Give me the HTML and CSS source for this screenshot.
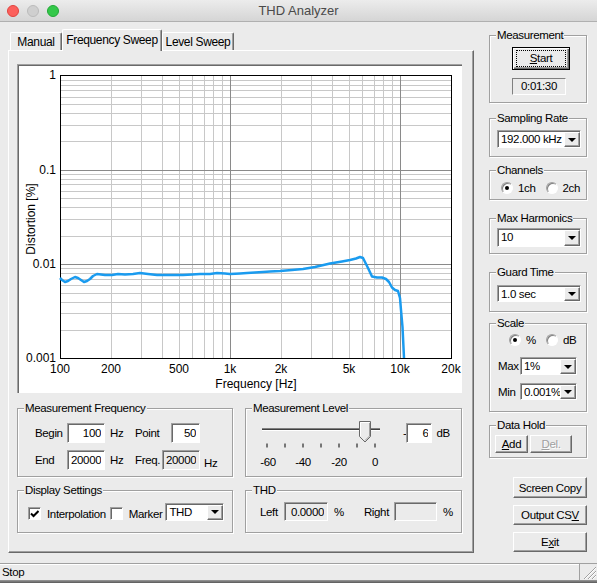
FILE: index.html
```html
<!DOCTYPE html>
<html lang="en">
<head>
<meta charset="UTF-8">
<meta name="viewport" content="width=device-width, initial-scale=1.0">
<title>THD Analyzer</title>
<link rel="stylesheet" href="styles.css">
</head>
<body>

<div class="window">

  <div class="titlebar">
    <div class="lights">
      <span class="light light-close"></span>
      <span class="light light-min"></span>
      <span class="light light-zoom"></span>
    </div>
    <div class="title">THD Analyzer</div>
  </div>

  <div class="main">

    <!-- Left: tab control with the sweep chart -->
    <div class="tabs">
      <div class="tab-strip">
        <div class="tab tab-manual">Manual</div>
        <div class="tab tab-active">Frequency Sweep</div>
        <div class="tab tab-level">Level Sweep</div>
      </div>

      <div class="tab-panel">
        <div class="chart">
          <svg class="plot" width="445" height="329" viewBox="17 64 445 329">
            <path class="grid-minor" d="M111.5 75V358M141.5 75V358M162.5 75V358M179.5 75V358M192.5 75V358M204.5 75V358M213.5 75V358M222.5 75V358M281.5 75V358M311.5 75V358M332.5 75V358M349.5 75V358M362.5 75V358M374.5 75V358M383.5 75V358M392.5 75V358M60 80.5H451M60 85.5H451M60 90.5H451M60 97.5H451M60 104.5H451M60 113.5H451M60 125.5H451M60 141.5H451M60 174.5H451M60 179.5H451M60 184.5H451M60 191.5H451M60 198.5H451M60 207.5H451M60 219.5H451M60 236.5H451M60 268.5H451M60 273.5H451M60 279.5H451M60 285.5H451M60 293.5H451M60 302.5H451M60 313.5H451M60 330.5H451"/>
            <path class="grid-major" d="M230.5 75V358M400.5 75V358M60 170.5H451M60 264.5H451"/>
            <rect class="axis" x="60.5" y="75.5" width="391" height="283"/>
            <polyline class="curve" points="60,278 62,280 65,282 68,281 71,279 75,277 78,278 81,280 84,282 87,281 90,279 93,276 97,274 105,275 112,275 118,274 125,274.5 133,274 140,273 148,274 157,275 170,275 183,275 192,274.5 200,274 210,274 217,273 225,273.5 230,274 240,273.5 247,273 255,272.5 263,272 270,271.5 280,271 292,270 303,269 315,267 330,263.5 342,261.5 350,260 356,258.5 360,257 363,258 365,262 368,268 372,276.5 377,277.5 382,277.5 386,279 389,282 392,287.5 395,290 398,291 400,298 401,310 402.5,327 404,358"/>

            <g class="labels-y">
              <text x="56" y="79">1</text>
              <text x="56" y="174">0.1</text>
              <text x="56" y="268">0.01</text>
              <text x="56" y="362">0.001</text>
            </g>
            <g class="labels-x">
              <text x="60" y="373">100</text>
              <text x="111" y="373">200</text>
              <text x="179" y="373">500</text>
              <text x="230" y="373">1k</text>
              <text x="281" y="373">2k</text>
              <text x="349" y="373">5k</text>
              <text x="400" y="373">10k</text>
              <text x="451" y="373">20k</text>
            </g>
            <text class="axis-title" x="256" y="388">Frequency [Hz]</text>
            <text class="axis-title" transform="translate(35 219) rotate(-90)">Distortion [%]</text>
          </svg>
        </div>

        <div class="settings">
          <div class="group g-freq">
            <span class="group-title">Measurement Frequency</span>
            <div class="row">
              <span class="lbl-name">Begin</span>
              <input class="edit edit-freq" type="text" value="100">
              <span class="unit">Hz</span>
              <span class="lbl-point">Point</span>
              <input class="edit edit-point" type="text" value="50">
            </div>
            <div class="row">
              <span class="lbl-name">End</span>
              <input class="edit edit-freq" type="text" value="20000">
              <span class="unit">Hz</span>
              <span class="lbl-fq">Freq.</span>
              <input class="edit edit-freq" type="text" value="20000" disabled>
              <span class="unit-low">Hz</span>
            </div>
          </div>

          <div class="group g-level">
            <span class="group-title">Measurement Level</span>
            <svg class="slider" width="130" height="53" viewBox="0 0 130 53">
              <rect x="4" y="11" width="118" height="1" fill="#808080"/>
              <rect x="4" y="12" width="118" height="1" fill="#404040"/>
              <rect x="4" y="13" width="118" height="1" fill="#fff"/>
              <path d="M9 26.5v4M27 26.5v4M45 26.5v4M63 26.5v4M81 26.5v4M99 26.5v4M117 26.5v4" stroke="#000"/>
              <polygon points="101.5,4.5 112.5,4.5 112.5,19.5 107,25 101.5,19.5" fill="#ebebeb" stroke="#696969"/>
              <polyline points="102.5,19 102.5,5.5 111.5,5.5" fill="none" stroke="#fff"/>
              <polyline points="111.5,6 111.5,19 107,23.5" fill="none" stroke="#a0a0a0"/>
              <g class="slider-labels">
                <text x="10" y="49">-60</text>
                <text x="45" y="49">-40</text>
                <text x="81" y="49">-20</text>
                <text x="117" y="49">0</text>
              </g>
            </svg>
            <div class="level-value">
              <span class="minus">-</span>
              <input class="edit edit-db" type="text" value="6">
              <span class="unit-db">dB</span>
            </div>
          </div>

          <div class="group g-display">
            <span class="group-title">Display Settings</span>
            <span class="check check-on">
              <svg width="9" height="8" viewBox="0 0 9 8"><path d="M1 3.5l2.5 2.5 5-5" fill="none" stroke="#000" stroke-width="2"/></svg>
            </span>
            <span class="check-text">Interpolation</span>
            <span class="check check-marker"></span>
            <span class="check-text">Marker</span>
            <div class="combo combo-marker"><span class="combo-text">THD</span><span class="combo-btn"></span></div>
          </div>

          <div class="group g-thd">
            <span class="group-title">THD</span>
            <span class="lbl-left">Left</span>
            <input class="edit edit-thd" type="text" value="0.0000" disabled>
            <span class="pct">%</span>
            <span class="lbl-right">Right</span>
            <input class="edit edit-thd edit-thd-r" type="text" value="" disabled>
            <span class="pct">%</span>
          </div>
        </div>
      </div>
    </div>

    <!-- Right: measurement controls -->
    <div class="side">
      <div class="group g-measure">
        <span class="group-title">Measurement</span>
        <button class="btn btn-start"><span class="focus"><u>S</u>tart</span></button>
        <div class="static">0:01:30</div>
      </div>

      <div class="group g-rate">
        <span class="group-title">Sampling Rate</span>
        <div class="combo combo-side"><span class="combo-text">192.000 kHz</span><span class="combo-btn"></span></div>
      </div>

      <div class="group g-channels">
        <span class="group-title">Channels</span>
        <div class="choice"><span class="radio radio-on"></span><span class="choice-text">1ch</span></div>
        <div class="choice"><span class="radio"></span><span class="choice-text">2ch</span></div>
      </div>

      <div class="group g-harm">
        <span class="group-title">Max Harmonics</span>
        <div class="combo combo-side combo-tall"><span class="combo-text">10</span><span class="combo-btn"></span></div>
      </div>

      <div class="group g-guard">
        <span class="group-title">Guard Time</span>
        <div class="combo combo-side combo-short"><span class="combo-text">1.0 sec</span><span class="combo-btn"></span></div>
      </div>

      <div class="group g-scale">
        <span class="group-title">Scale</span>
        <div class="scale-radios">
          <div class="choice"><span class="radio radio-on"></span><span class="choice-text">%</span></div>
          <div class="choice"><span class="radio"></span><span class="choice-text">dB</span></div>
        </div>
        <div class="scale-row">
          <span class="lbl-scale">Max</span>
          <div class="combo combo-scale"><span class="combo-text">1%</span><span class="combo-btn"></span></div>
        </div>
        <div class="scale-row scale-min">
          <span class="lbl-scale">Min</span>
          <div class="combo combo-scale combo-short"><span class="combo-text">0.001%</span><span class="combo-btn"></span></div>
        </div>
      </div>

      <div class="group g-hold">
        <span class="group-title">Data Hold</span>
        <button class="btn btn-add"><u>A</u>dd</button>
        <button class="btn btn-del" disabled><u>D</u>el.</button>
      </div>

      <div class="actions">
        <button class="btn btn-action btn-copy">Screen Copy</button>
        <button class="btn btn-action">Output CS<u>V</u></button>
        <button class="btn btn-action">E<u>x</u>it</button>
      </div>
    </div>

  </div>

  <div class="statusbar">
    <div class="status-text">Stop</div>
    <div class="grip">
      <svg width="17" height="17" viewBox="0 0 17 17">
        <path d="M16 4L4 16M16 8L8 16M16 12L12 16" stroke="#a0a0a0"/>
        <path d="M16 5L5 16M16 9L9 16M16 13L13 16" stroke="#fff"/>
      </svg>
    </div>
  </div>
  <div class="window-edge"></div>

</div>

</body>
</html>
```

FILE: styles.css
```css
/* --- Basic setup --- */
body {
  margin: 0;
  font-family: "Liberation Sans", Arial, sans-serif;
  font-size: 11.5px;
  letter-spacing: -0.35px;
  color: #000;
  background-color: #ebebeb;
}

.window {
  width: 597px;
  height: 583px;
  display: flex;
  flex-direction: column;
  overflow: hidden;
  white-space: nowrap;
}

/* --- Title bar --- */
.titlebar {
  flex: none;
  height: 22px;
  box-sizing: border-box;
  display: grid;
  grid-template-columns: 1fr auto 1fr;
  align-items: center;
  background: linear-gradient(#ececec, #d5d5d5);
  border-bottom: 1px solid #b0b0b0;
}

.lights {
  display: flex;
  gap: 8px;
  padding-left: 7px;
}

.light {
  width: 12px;
  height: 12px;
  border-radius: 50%;
  box-sizing: border-box;
}

.light-close { background: #fc605c; border: 1px solid #e0443f; }
.light-min   { background: #cfcfcf; border: 1px solid #bbbbbb; }
.light-zoom  { background: #34c84a; border: 1px solid #22a836; }

.title {
  font-size: 13px;
  letter-spacing: 0;
  color: #4a4a4a;
}

/* --- Main area --- */
.main {
  flex: 1;
  display: flex;
  gap: 15px;
  padding: 0 10px 0 8px;
}

/* --- Tabs --- */
.tabs {
  width: 466px;
  margin-top: 7px;
}

.tab-strip {
  display: flex;
  align-items: flex-end;
  height: 21px;
  padding-left: 2px;
}

.tab {
  height: 18px;
  box-sizing: border-box;
  padding-top: 2px;
  text-align: center;
  font-size: 12px;
  border: 1px solid;
  border-bottom: 0;
  border-color: #fff #696969 #696969 #fff;
  border-radius: 2px 2px 0 0;
  box-shadow: inset -1px 0 0 #a0a0a0;
}

.tab-manual { width: 52px; }
.tab-level  { width: 72px; }

.tab-active {
  position: relative;
  z-index: 1;
  width: 100px;
  height: 22px;
  margin-bottom: -1px;
  padding-top: 3px;
  background: #ebebeb;
}

.tab-panel {
  height: 503px;
  box-sizing: border-box;
  border: 1px solid;
  border-color: #fff #696969 #696969 #fff;
  box-shadow: inset -1px -1px 0 #a0a0a0;
  padding: 13px 0 0 8px;
}

/* --- Chart --- */
.chart {
  width: 445px;
  height: 329px;
  background: #fff;
  box-shadow: inset 1px 1px 0 #a0a0a0, inset 2px 2px 0 #696969;
}

.plot {
  display: block;
}

.plot text {
  font-size: 12px;
  letter-spacing: 0;
  fill: #000;
}

.grid-minor { fill: none; stroke: #c8c8c8; }
.grid-major { fill: none; stroke: #8a8a8a; }
.axis { fill: none; stroke: #000; }

.curve {
  fill: none;
  stroke: #1a9bef;
  stroke-width: 2.5;
  stroke-linejoin: round;
}

.labels-y text { text-anchor: end; }
.labels-x text,
.axis-title { text-anchor: middle; }

/* --- Settings below the chart --- */
.settings {
  display: grid;
  grid-template-columns: 216px 217px;
  grid-template-rows: 69px 43px;
  gap: 13px 12px;
  margin-top: 15px;
}

.group {
  position: relative;
  box-sizing: border-box;
  border: 1px solid #a0a0a0;
  box-shadow: inset 1px 1px 0 #fff, 1px 1px 0 #fff;
}

.group-title {
  position: absolute;
  top: -8px;
  left: 6px;
  padding: 0 1px;
  line-height: 14px;
  background: #ebebeb;
}

/* Edit boxes */
.edit {
  box-sizing: border-box;
  height: 20px;
  margin: 0;
  padding: 0 3px;
  font: inherit;
  letter-spacing: inherit;
  color: #000;
  text-align: right;
  background: #fff;
  border: 1px solid;
  border-color: #a0a0a0 #fff #fff #a0a0a0;
  box-shadow: inset 1px 1px 0 #696969;
  border-radius: 0;
  outline: none;
}

.edit:disabled {
  background: #ebebeb;
  color: #000;
  -webkit-text-fill-color: #000;
}

.g-freq {
  padding: 14px 0 0 17px;
}

.row {
  display: flex;
  align-items: center;
  height: 20px;
}

.row + .row {
  margin-top: 7px;
}

.lbl-name  { width: 32px; }
.lbl-point { width: 36px; }
.lbl-fq    { width: 27px; }
.unit      { width: 30px; box-sizing: border-box; padding-left: 5px; }
.unit-low  { margin: 6px 0 0 4px; }

.edit-freq  { width: 38px; }
.edit-point { width: 29px; }

/* Level slider */
.g-level {
  display: flex;
  align-items: flex-start;
  padding: 8px 0 0 12px;
}

.slider {
  display: block;
}

.slider-labels text {
  font-size: 11.5px;
  text-anchor: middle;
}

.level-value {
  display: flex;
  align-items: center;
  margin: 6px 0 0 15px;
}

.edit-db { width: 26px; }
.unit-db { margin-left: 4px; }

/* Display settings */
.g-display {
  display: flex;
  align-items: center;
  padding: 0 0 0 10px;
}

.check {
  width: 13px;
  height: 13px;
  box-sizing: border-box;
  display: flex;
  align-items: center;
  justify-content: center;
  background: #fff;
  border: 1px solid;
  border-color: #a0a0a0 #fff #fff #a0a0a0;
  box-shadow: inset 1px 1px 0 #696969;
  margin-top: 4px;
}

.check-text { margin: 4px 0 0 6px; }
.check-marker { margin-left: 4px; }

.combo-marker {
  width: 59px;
  height: 17px;
  margin-left: 3px;
}

/* THD readout */
.g-thd {
  display: flex;
  align-items: center;
  padding: 0 0 0 14px;
}

.edit-thd {
  width: 44px;
  height: 19px;
}

.edit-thd-r { width: 43px; }

.lbl-left  { width: 24px; }
.lbl-right { width: 30px; margin-left: 20px; }
.pct       { margin-left: 6px; }

/* Combo boxes */
.combo {
  display: flex;
  box-sizing: border-box;
  height: 18px;
  background: #fff;
  border: 1px solid;
  border-color: #a0a0a0 #fff #fff #a0a0a0;
  box-shadow: inset 1px 1px 0 #696969;
}

.combo-text {
  flex: 1;
  overflow: hidden;
  padding: 0 0 0 3px;
  line-height: 16px;
}

.combo-btn {
  flex: none;
  width: 16px;
  margin-top: 1px;
  box-sizing: border-box;
  display: flex;
  align-items: center;
  justify-content: center;
  background: #ebebeb;
  border: 1px solid;
  border-color: #fff #696969 #696969 #fff;
  box-shadow: inset -1px -1px 0 #a0a0a0;
}

.combo-btn::after {
  content: "";
  border-style: solid;
  border-width: 4px 4px 0;
  border-color: #000 transparent transparent;
}

/* --- Right column --- */
.side {
  width: 98px;
  display: flex;
  flex-direction: column;
}

.side .group {
  flex: none;
}

.g-measure  { margin-top: 13px; height: 68px; padding: 11px 0 0 22px; }
.g-rate     { margin-top: 15px; height: 39px; padding: 11px 0 0 7px; }
.g-channels { margin-top: 13px; height: 30px; padding: 11px 0 0 11px; display: flex; }
.g-harm     { margin-top: 18px; height: 36px; padding: 9px 0 0 7px; }
.g-guard    { margin-top: 18px; height: 40px; padding: 12px 0 0 7px; }
.g-scale    { margin-top: 11px; height: 89px; padding: 10px 0 0 8px; }
.g-hold     { margin-top: 13px; height: 33px; padding: 9px 0 0 5px; display: flex; gap: 2px; }

.combo-side  { width: 84px; }
.combo-tall  { height: 19px; }
.combo-short { height: 17px; }

.choice {
  display: flex;
  align-items: center;
  height: 12px;
}

.choice + .choice {
  margin-left: 10px;
}

.choice-text {
  margin-left: 5px;
}

.radio {
  width: 12px;
  height: 12px;
  box-sizing: border-box;
  display: flex;
  align-items: center;
  justify-content: center;
  border-radius: 50%;
  background: #fff;
  border: 1px solid;
  border-color: #a0a0a0 #fff #fff #a0a0a0;
  box-shadow: inset 1px 1px 0 #808080;
}

.radio-on::after {
  content: "";
  width: 4px;
  height: 4px;
  border-radius: 50%;
  background: #000;
}

.scale-radios {
  display: flex;
  padding-left: 11px;
}

.scale-row {
  display: flex;
  align-items: center;
  margin-top: 11px;
}

.scale-min {
  margin-top: 8px;
}

.lbl-scale { width: 22px; }
.combo-scale { width: 57px; }

/* --- Buttons --- */
.btn {
  box-sizing: border-box;
  margin: 0;
  padding: 0;
  font: inherit;
  letter-spacing: inherit;
  color: #000;
  background: #ebebeb;
  border: 1px solid;
  border-color: #fff #696969 #696969 #fff;
  border-radius: 0;
  box-shadow: inset -1px -1px 0 #a0a0a0;
}

.btn-start {
  display: block;
  width: 58px;
  height: 23px;
  border-color: #000;
  box-shadow: inset 1px 1px 0 #fff, inset -1px -1px 0 #696969, inset -2px -2px 0 #a0a0a0;
}

.focus {
  display: block;
  margin: 0 3px;
  line-height: 15px;
  border: 1px dotted #000;
}

.static {
  box-sizing: border-box;
  width: 54px;
  height: 17px;
  margin-top: 8px;
  line-height: 15px;
  text-align: center;
  border: 1px solid;
  border-color: #808080 #fff #fff #808080;
}

.btn-add { width: 33px; height: 18px; }
.btn-del { width: 42px; height: 18px; color: #a0a0a0; text-shadow: 1px 1px 0 #fff; }

.actions {
  display: flex;
  flex-direction: column;
  align-items: flex-end;
  gap: 7px;
  margin-top: 19px;
}

.btn-action { width: 74px; height: 20px; }
.btn-copy   { height: 21px; }

/* --- Status bar --- */
.statusbar {
  flex: none;
  height: 17px;
  display: flex;
}

.status-text {
  flex: 1;
  padding-left: 2px;
  line-height: 16px;
  border-top: 1px solid #a0a0a0;
  border-right: 1px solid #a0a0a0;
  box-shadow: inset 0 1px 0 #fff;
}

.grip {
  width: 17px;
  border-top: 1px solid #a0a0a0;
}

.grip svg {
  display: block;
  margin-top: -1px;
}

.window-edge {
  flex: none;
  height: 3px;
  background: linear-gradient(#9a9a9a, #585858);
}
```
